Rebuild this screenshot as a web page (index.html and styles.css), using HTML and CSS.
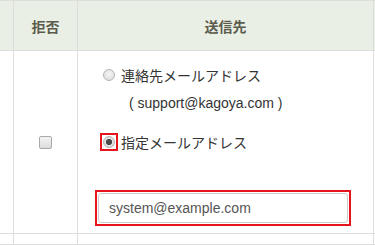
FILE: index.html
```html
<!DOCTYPE html>
<html lang="ja">
<head>
<meta charset="utf-8">
<link rel="stylesheet" href="styles.css">
</head>
<body>
<div class="grid">
  <div class="th edge"></div>
  <div class="th">拒否</div>
  <div class="th">送信先</div>
  <div class="th tail"></div>

  <div class="td edge"></div>
  <div class="td center"><input type="checkbox" class="chk"></div>
  <div class="td dest">
    <label class="opt"><input type="radio" name="to" class="radio"><span>連絡先メールアドレス</span></label>
    <div class="addr">( support@kagoya.com )</div>
    <label class="opt opt2"><span class="mark"><input type="radio" name="to" class="radio" checked></span><span>指定メールアドレス</span></label>
    <div class="mark boxwrap"><input type="text" class="mail" value="system@example.com"></div>
  </div>
  <div class="td tail"></div>

  <div class="td edge"></div>
  <div class="td"></div>
  <div class="td"></div>
  <div class="td tail"></div>
</div>
</body>
</html>
```
FILE: styles.css
```css
html, body {
  margin: 0;
  padding: 0;
  background: #fff;
  overflow: hidden;
}
body {
  font-family: "Liberation Sans", "Noto Sans CJK JP", sans-serif;
  font-size: 14px;
  color: #333;
}
.grid {
  display: grid;
  grid-template-columns: 14px 64px 296px 1px;
  grid-template-rows: 51px 183px 11px;
}
.th, .td {
  box-sizing: border-box;
  border-right: 1px solid #dddddd;
}
.tail { border-right: none; }
.th {
  background: #e9efe5;
  border-top: 1px solid #dcdfd8;
  border-bottom: 1px solid #dcdcdc;
  display: flex;
  align-items: center;
  justify-content: center;
  font-weight: bold;
  color: #5b5b4d;
  font-family: "Noto Sans CJK JP", sans-serif;
  font-size: 14px;
}
.td {
  border-bottom: 1px solid #dddddd;
}
.center {
  display: flex;
  align-items: center;
  justify-content: center;
}
.chk {
  appearance: none;
  -webkit-appearance: none;
  margin: 0;
  width: 13px;
  height: 13px;
  box-sizing: border-box;
  border: 1px solid #a9a9a9;
  border-radius: 2px;
  background: linear-gradient(#f4f4f4, #dcdcdc);
}
.dest {
  padding: 14px 0 0 25px;
  display: flex;
  flex-direction: column;
  align-items: flex-start;
}
.opt {
  display: flex;
  align-items: center;
  height: 20px;
  font-family: "Noto Sans CJK JP", sans-serif;
  font-size: 14px;
  color: #333;
}
.radio {
  appearance: none;
  -webkit-appearance: none;
  display: block;
  margin: 0;
  width: 12px;
  height: 12px;
  box-sizing: border-box;
  border-radius: 50%;
  border: 1px solid #b5b5b5;
  background: radial-gradient(circle at 50% 40%, #f6f6f6, #d8d8d8);
}
.opt > .radio, .opt > .mark {
  margin-right: 6px;
}
.radio:checked {
  background: radial-gradient(circle, #4a4a4a 0, #4a4a4a 2.8px, #e4e4e4 3.3px, #d0d0d0 100%);
}
.addr {
  margin: 8px 0 0 26px;
  line-height: 20px;
  color: #333;
}
.opt2 {
  margin-top: 19px;
}
.mark {
  display: block;
  outline: 2px solid #e8141c;
  outline-offset: 1px;
}
.boxwrap {
  margin: 41px 0 0 -5px;
  line-height: 0;
}
.mail {
  display: block;
  margin: 0;
  width: 250px;
  height: 30px;
  box-sizing: border-box;
  border: 1px solid #cccccc;
  border-radius: 3px;
  padding: 0 10px;
  font-family: "Liberation Sans", sans-serif;
  font-size: 14px;
  color: #555;
  background: #fff;
}
```
